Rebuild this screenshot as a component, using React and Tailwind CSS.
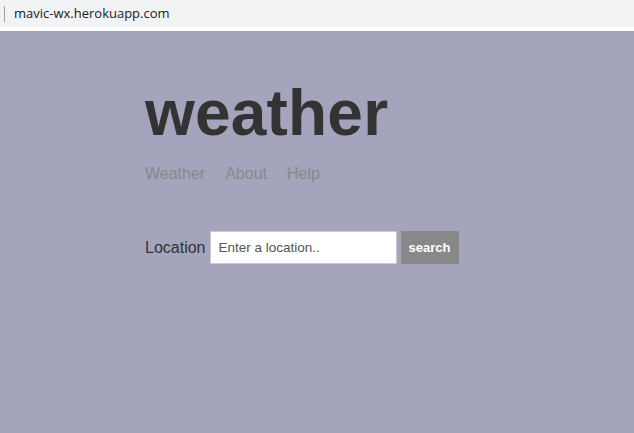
export default function App() {
  return (
    <div className="min-h-[433px] flex flex-col bg-[#a4a4bd] font-['Liberation_Sans',Arial,sans-serif]">
      {/* browser address strip */}
      <div className="h-[27px] bg-[#f1f3f4] flex items-center">
        <div className="ml-[4px] w-px h-[16px] bg-[#9aa0a6]" />
        <span className="ml-[9px] text-[13px] text-[#202124] font-['Open_Sans','Liberation_Sans',sans-serif]">
          mavic-wx.herokuapp.com
        </span>
      </div>
      <div className="h-[4px] bg-white" />

      <div className="pl-[145px] pt-[50px]">
        <h1 className="text-[64px] font-bold text-[#333] leading-none tracking-[0.2px]">weather</h1>

        <nav className="mt-[19px] flex gap-[20px] text-[16px] text-[#888] leading-5">
          <a>Weather</a>
          <a>About</a>
          <a>Help</a>
        </nav>

        <div className="mt-[47px] flex items-center">
          <label className="text-[16px] text-[#333] mr-[4px]">Location</label>
          <input
            placeholder="Enter a location.."
            className="w-[187px] h-[33px] bg-white border border-[#ccc] px-[8px] text-[13.5px] text-[#555] placeholder:text-[#555] outline-none"
          />
          <button className="ml-[4px] w-[58px] h-[33px] bg-[#888] text-white text-[13px] font-bold">
            search
          </button>
        </div>
      </div>
    </div>
  )
}
